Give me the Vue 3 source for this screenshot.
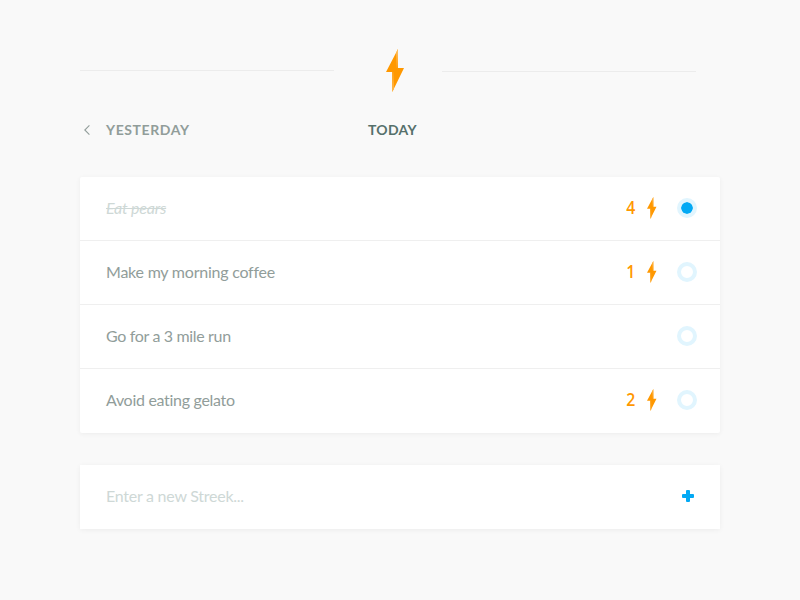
<script setup>
const streeks = [
  { name: 'Eat pears', count: 4, done: true, fit: 'eat' },
  { name: 'Make my morning coffee', count: 1, done: false, fit: 'make' },
  { name: 'Go for a 3 mile run', count: null, done: false, fit: 'go' },
  { name: 'Avoid eating gelato', count: 2, done: false, fit: 'avoid' },
]
</script>

<template>
  <main class="page">
    <svg class="defs" aria-hidden="true">
      <linearGradient id="shine" x1="0" y1="0" x2="0" y2="1">
        <stop offset="0" stop-color="#ffc46b" />
        <stop offset="1" stop-color="#ff9d0d" />
      </linearGradient>
      <linearGradient id="glow" x1="0" y1="0" x2="0" y2="1">
        <stop offset="0" stop-color="#ff9d0d" />
        <stop offset="1" stop-color="#ffb84d" />
      </linearGradient>
    </svg>

    <header class="brand">
      <span class="rule"></span>
      <svg class="logo" viewBox="0 0 18 43">
        <path d="M12 0 L0 23 H6.3 V43 L18 19 H12 Z" fill="#ff9800" />
        <path d="M12 0 L10.2 3.5 V19 H12 Z" fill="url(#shine)" />
        <path d="M6.3 23 H8 V39.5 L6.3 43 Z" fill="url(#glow)" />
      </svg>
      <span class="rule low"></span>
    </header>

    <nav class="days">
      <a class="yesterday">
        <svg class="chevron" viewBox="0 0 6 10"><path d="M5.4 .4 L.8 5 L5.4 9.6" /></svg>
        <span>YESTERDAY</span>
      </a>
      <span class="today">TODAY</span>
    </nav>

    <ul class="card list">
      <li v-for="s in streeks" :key="s.name" class="row">
        <span class="name"><span :class="[s.fit, { done: s.done }]">{{ s.name }}</span></span>
        <template v-if="s.count">
          <span class="count">{{ s.count }}</span>
          <svg class="bolt" viewBox="0 0 18 43" preserveAspectRatio="none">
            <path d="M12 0 L0 23 H6.3 V43 L18 19 H12 Z" fill="#ff9800" />
            <path d="M12 0 L10.2 3.5 V19 H12 Z" fill="url(#shine)" />
            <path d="M6.3 23 H8 V39.5 L6.3 43 Z" fill="url(#glow)" />
          </svg>
        </template>
        <span class="check" :class="{ on: s.done }"></span>
      </li>
    </ul>

    <section class="card entry">
      <span class="placeholder">Enter a new Streek...</span>
      <svg class="plus" viewBox="0 0 12 12">
        <rect x="4" y="0" width="4" height="12" rx="1" />
        <rect x="0" y="4" width="12" height="4" rx="1" />
      </svg>
    </section>
  </main>
</template>

<style>
body { background: #f9f9f9; }
</style>

<style scoped>
.page {
  box-sizing: border-box;
  width: 800px;
  height: 600px;
  padding: 49px 80px 0;
  background: #f9f9f9;
  font-family: Lato, "Open Sans", sans-serif;
  font-size: 16px;
  font-variant-ligatures: none;
  color: #919d9a;
}
.defs { display: block; width: 0; height: 0; }
.brand { display: flex; height: 43px; }
.rule { width: 254px; height: 1px; margin-top: 21px; background: #ececec; }
.rule.low { margin-top: 22px; }
.logo { width: 18px; height: 43px; margin: 0 38px 0 52px; }
.days {
  display: flex;
  align-items: center;
  height: 20px;
  margin-top: 28px;
  font-size: 14px;
  font-weight: 700;
  line-height: 20px;
}
.yesterday { display: flex; align-items: center; width: 284px; padding-left: 4px; letter-spacing: .6px; }
.chevron { width: 6px; height: 10px; margin-right: 16px; fill: none; stroke: #919d9a; stroke-width: 1.1; }
.today { color: #56706b; letter-spacing: .3px; }
.card { background: #fff; border-radius: 2px; box-shadow: 0 1px 5px rgba(0, 0, 0, .055); }
.list { margin: 37px 0 0; padding: 0; list-style: none; }
.row {
  display: flex;
  align-items: center;
  box-sizing: border-box;
  height: 64px;
  padding: 0 23px 1px 26px;
  border-bottom: 1px solid #efefef;
}
.row:last-child { padding-bottom: 2px; border-bottom: 0; }
.name { flex: 1; line-height: 24px; white-space: nowrap; }
.eat { letter-spacing: -.2px; }
.make { letter-spacing: -.23px; }
.go { letter-spacing: -.34px; }
.avoid { letter-spacing: -.3px; }
.done { color: #ced8d6; font-style: italic; text-decoration: line-through; }
.count {
  margin-top: -2px;
  color: #ff9800;
  font-family: "Open Sans", sans-serif;
  font-size: 18px;
  font-weight: 600;
  line-height: 24px;
  transform: scaleX(.88);
  transform-origin: right;
}
.bolt { width: 9.5px; height: 22px; margin: 0 20.5px 0 12px; }
.check { box-sizing: border-box; width: 20px; height: 20px; border: 4px solid #e1f5fe; border-radius: 50%; }
.check.on { background: #03a9f4; background-clip: padding-box; }
.entry {
  display: flex;
  align-items: center;
  justify-content: space-between;
  height: 64px;
  margin-top: 32px;
  padding: 0 26px;
  border-radius: 0;
}
.placeholder { margin-top: -3px; color: #ced8d6; letter-spacing: -.25px; }
.plus { width: 12px; height: 12px; margin-top: -2px; fill: #03a9f4; }
</style>
